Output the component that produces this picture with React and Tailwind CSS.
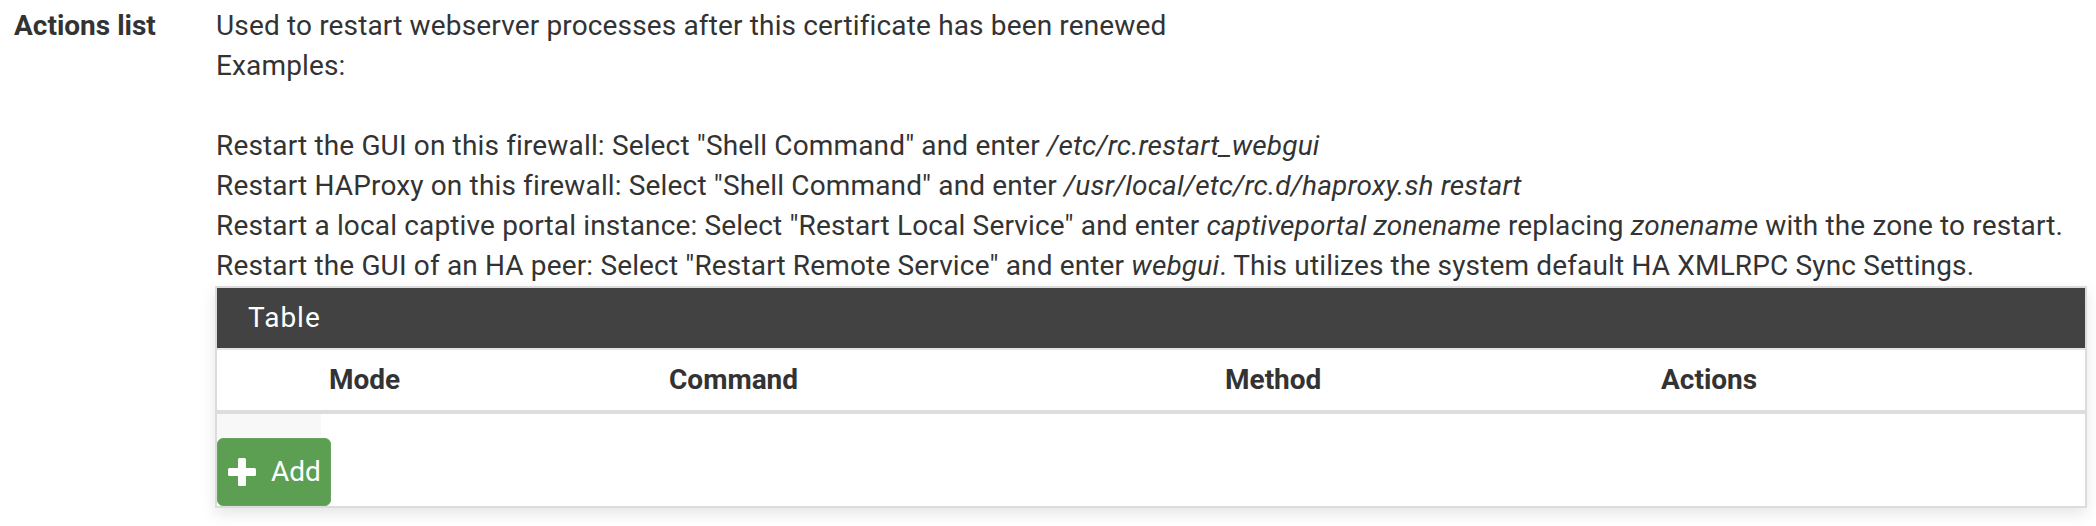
import React from 'react';

const lines = [
  <>Used to restart webserver processes after this certificate has been renewed</>,
  <>Examples:</>,
  <>&nbsp;</>,
  <>
    Restart the GUI on this firewall: Select "Shell Command" and enter <i>/etc/rc.restart_webgui</i>
  </>,
  <>
    Restart HAProxy on this firewall: Select "Shell Command" and enter <i>/usr/local/etc/rc.d/haproxy.sh restart</i>
  </>,
  <>
    Restart a local captive portal instance: Select "Restart Local Service" and enter <i>captiveportal zonename</i> replacing{' '}
    <i>zonename</i> with the zone to restart.
  </>,
  <>
    Restart the GUI of an HA peer: Select "Restart Remote Service" and enter <i>webgui</i>. This utilizes the system default HA
    XMLRPC Sync Settings.
  </>,
];

const PlusIcon = () => (
  <svg width="30" height="28" viewBox="0 0 30 28" fill="white">
    <rect x="11" y="0" width="8" height="28" rx="1.5" />
    <rect x="1" y="10" width="28" height="8" rx="1.5" />
  </svg>
);

const App = () => {
  return (
    <div className="w-[2096px] h-[526px] bg-white text-[#333] font-['Roboto',sans-serif] text-[28px] leading-[40px]">
      <div className="flex pt-[6px]">
        {/* label column */}
        <div className="w-[215px] shrink-0 pl-[14px] font-bold">Actions list</div>

        <div className="flex-1 pr-[6px]">
          {lines.map((l, i) => (
            <div key={i} className="whitespace-nowrap pl-[1px] tracking-[0.15px]">
              {l}
            </div>
          ))}

          {/* table panel */}
          <div className="w-[1872px] border-2 border-[#dcdcdc] shadow-[0_6px_14px_rgba(0,0,0,0.10)] bg-white">
            <div className="h-[60px] bg-[#424242] text-white flex items-center pl-[31px] tracking-[1px]">Table</div>
            <div className="h-[62px] border-t-2 border-[#e4e4e4] grid grid-cols-[96px_340px_556px_436px_1fr] items-center font-bold">
              <div />
              <div className="pl-[16px]">Mode</div>
              <div className="pl-[16px]">Command</div>
              <div className="pl-[16px]">Method</div>
              <div className="pl-[16px]">Actions</div>
            </div>
            <div className="border-t-4 border-[#dddddd]">
              <div className="h-[24px] w-[104px] bg-[#f8f8f8]" />
              <button className="w-[114px] h-[68px] flex items-center pl-[9px] gap-[14px] bg-[#5c9e52] border border-[#66a65c] rounded-[6px] text-white overflow-hidden">
                <PlusIcon />
                <span>Add</span>
              </button>
            </div>
          </div>
        </div>
      </div>
    </div>
  );
};

export default App;
